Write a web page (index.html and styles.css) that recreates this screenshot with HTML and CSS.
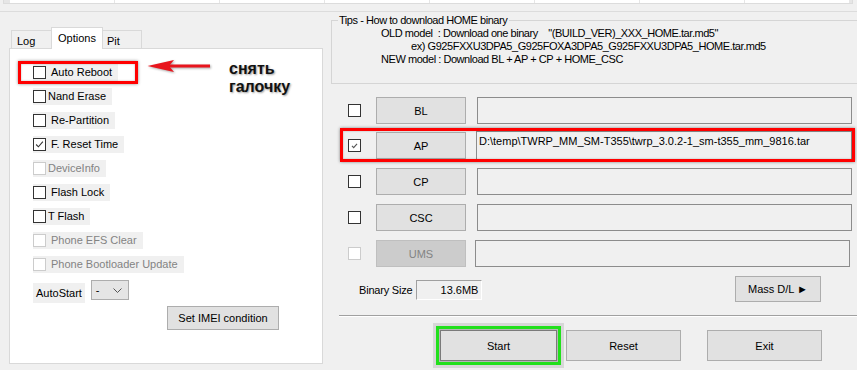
FILE: index.html
```html
<!DOCTYPE html>
<html lang="en">
<head>
    <meta charset="UTF-8">
    <title>Odin</title>
    <link rel="stylesheet" href="styles.css">
</head>
<body>
    <div class="topbar">
        <div class="topbar-frame">
            <span class="cell"></span><span class="cell"></span><span class="cell"></span><span class="cell"></span>
            <span class="cell"></span><span class="cell"></span><span class="cell"></span><span class="cell"></span>
        </div>
    </div>

    <div class="main">
        <div class="left">
            <div class="tabs">
                <div class="tab tab-log">Log</div>
                <div class="tab tab-active">Options</div>
                <div class="tab tab-pit">Pit</div>
            </div>
            <div class="panel">
                <div class="opt"><span class="box"></span><span class="opt-text opt-wide">Auto Reboot</span></div>
                <div class="opt"><span class="box"></span><span class="opt-text">Nand Erase</span></div>
                <div class="opt"><span class="box"></span><span class="opt-text opt-wide">Re-Partition</span></div>
                <div class="opt"><span class="box checked"><svg viewBox="0 0 13 13"><path d="M2.5 6.5 L5.2 9.2 L10.5 3.2"/></svg></span><span class="opt-text opt-wide">F. Reset Time</span></div>
                <div class="opt disabled"><span class="box"></span><span class="opt-text">DeviceInfo</span></div>
                <div class="opt"><span class="box"></span><span class="opt-text opt-wide">Flash Lock</span></div>
                <div class="opt"><span class="box"></span><span class="opt-text">T Flash</span></div>
                <div class="opt disabled"><span class="box"></span><span class="opt-text opt-wide">Phone EFS Clear</span></div>
                <div class="opt disabled"><span class="box"></span><span class="opt-text opt-wide">Phone Bootloader Update</span></div>

                <div class="autostart">
                    <span class="autostart-label">AutoStart</span>
                    <div class="combo">
                        <span>-</span>
                        <svg viewBox="0 0 9 5"><path d="M0.5 0.5 L4.5 4.5 L8.5 0.5"/></svg>
                    </div>
                </div>
                <button class="btn btn-imei">Set IMEI condition</button>

                <!-- annotation drawn over the screenshot -->
                <div class="mark-box mark-auto"></div>
                <svg class="mark-arrow" viewBox="0 0 64 14">
                    <path class="arrow-shaft" d="M20 7 L63 7"/>
                    <path class="arrow-head" d="M0.5 7 L27 1 L22 7 L27 13 Z"/>
                </svg>
                <div class="mark-note">снять<br>галочку</div>
            </div>
        </div>

        <div class="right">
            <fieldset class="tips">
                <legend>Tips - How to download HOME binary</legend>
                <div class="tips-line">OLD model  : Download one binary    "(BUILD_VER)_XXX_HOME.tar.md5"</div>
                <div class="tips-line tips-indent">ex) G925FXXU3DPA5_G925FOXA3DPA5_G925FXXU3DPA5_HOME.tar.md5</div>
                <div class="tips-line">NEW model : Download BL + AP + CP + HOME_CSC</div>
            </fieldset>

            <div class="files">
                <div class="file-row">
                    <span class="box"></span>
                    <button class="btn btn-file">BL</button>
                    <div class="file-path"></div>
                </div>
                <div class="file-row">
                    <span class="box checked small"><svg viewBox="0 0 13 13"><path d="M3.5 7 L5.5 9 L9.5 4.5"/></svg></span>
                    <button class="btn btn-file">AP</button>
                    <div class="file-path file-path-ap">D:\temp\TWRP_MM_SM-T355\twrp_3.0.2-1_sm-t355_mm_9816.tar</div>
                    <div class="mark-box mark-ap"></div>
                </div>
                <div class="file-row">
                    <span class="box"></span>
                    <button class="btn btn-file">CP</button>
                    <div class="file-path"></div>
                </div>
                <div class="file-row">
                    <span class="box"></span>
                    <button class="btn btn-file">CSC</button>
                    <div class="file-path"></div>
                </div>
                <div class="file-row disabled">
                    <span class="box"></span>
                    <button class="btn btn-file">UMS</button>
                    <div class="file-path file-path-ums"></div>
                </div>
            </div>

            <div class="size-row">
                <span class="size-label">Binary Size</span>
                <div class="size-value">13.6MB</div>
                <button class="btn btn-mass">Mass D/L ►</button>
            </div>

            <div class="sep"></div>

            <div class="actions">
                <button class="btn btn-action btn-start">Start</button>
                <button class="btn btn-action">Reset</button>
                <button class="btn btn-action btn-exit">Exit</button>
            </div>
        </div>
    </div>
</body>
</html>
```

FILE: styles.css
```css
:root {
    --window-bg: #f0f0f0;
    --border-light: #d9d9d9;
    --btn-bg: #e1e1e1;
    --btn-border: #adadad;
    --text: #000000;
    --text-disabled: #838383;
    --mark-red: #ff0000;
    --mark-green: #22e01c;
}

* {
    margin: 0;
    padding: 0;
    box-sizing: border-box;
}

body {
    width: 857px;
    height: 370px;
    overflow: hidden;
    background: var(--window-bg);
    color: var(--text);
    font-family: 'Liberation Sans', Arial, sans-serif;
    font-size: 11px;
}

/* top strip (cut-off table) */
.topbar {
    height: 12px;
    border-bottom: 1px solid #dcdcdc;
    padding: 0 4px 0 3px;
}

.topbar-frame {
    height: 4px;
    border: 1px solid #dcdcdc;
    border-top: none;
    display: flex;
    gap: 1px;
    padding-left: 6px;
    background: #e6e6e6;
}

.cell {
    width: 104px;
    height: 3px;
    background: #ffffff;
}

.main {
    display: flex;
    height: 358px;
}

/* left: tabs + options */
.left {
    width: 314px;
    margin-left: 9px;
    padding-top: 15px;
    flex-shrink: 0;
}

.tabs {
    display: flex;
    align-items: flex-end;
    height: 21px;
    padding-left: 2px;
    position: relative;
    z-index: 1;
}

.tab {
    height: 18px;
    border: 1px solid var(--border-light);
    border-bottom: none;
    background: var(--window-bg);
    padding: 4px 0 0 5px;
    line-height: 12px;
}

.tab-log {
    width: 41px;
    margin-right: -1px;
}

.tab-active {
    width: 52px;
    height: 22px;
    margin-bottom: -1px;
    background: #ffffff;
    padding-top: 4px;
    padding-left: 6px;
}

.tab-pit {
    width: 40px;
    margin-left: -1px;
    padding-left: 4px;
}

.panel {
    position: relative;
    height: 316px;
    border: 1px solid var(--border-light);
    background: #ffffff;
    padding: 15px 0 0 23px;
}

.opt {
    display: flex;
    align-items: center;
    width: fit-content;
    height: 17px;
    margin-bottom: 7px;
    background: var(--window-bg);
}

.opt-text {
    margin-left: 2px;
    padding-right: 6px;
    line-height: 17px;
}

.opt-wide {
    margin-left: 5px;
}

.opt.disabled {
    color: var(--text-disabled);
}

.box {
    width: 13px;
    height: 13px;
    flex-shrink: 0;
    border: 1px solid #333333;
    background: #ffffff;
    display: flex;
}

.box svg {
    width: 11px;
    height: 11px;
    fill: none;
    stroke: #333333;
    stroke-width: 1.3;
}

.box.small svg {
    stroke: #555555;
}

.disabled .box {
    border-color: #cccccc;
}

.autostart {
    display: flex;
    align-items: flex-start;
    height: 23px;
    margin-top: 5px;
}

.autostart-label {
    margin-top: 3px;
    height: 20px;
    padding: 0 3px 0 3px;
    line-height: 20px;
    background: var(--window-bg);
}

.combo {
    display: flex;
    align-items: center;
    justify-content: space-between;
    width: 38px;
    height: 20px;
    margin-left: 6px;
    padding: 0 6px 0 4px;
    border: 1px solid var(--btn-border);
    background: #e5e5e5;
}

.combo svg {
    width: 9px;
    height: 5px;
    fill: none;
    stroke: #555555;
}

.btn {
    font-family: inherit;
    font-size: 11px;
    color: var(--text);
    background: var(--btn-bg);
    border: 1px solid var(--btn-border);
}

.btn-imei {
    display: block;
    width: 112px;
    height: 24px;
    margin: 3px 0 0 134px;
}

/* annotations */
.mark-box {
    position: absolute;
    border: 3px solid var(--mark-red);
    box-shadow: 0 0 3px rgba(0, 0, 0, 0.45), inset 0 0 2px rgba(0, 0, 0, 0.3);
}

.mark-auto {
    left: 8px;
    top: 12px;
    width: 120px;
    height: 23px;
}

.mark-arrow {
    position: absolute;
    left: 137px;
    top: 10px;
    width: 64px;
    height: 14px;
    filter: drop-shadow(1px 1px 1px rgba(0, 0, 0, 0.35));
}

.arrow-shaft {
    stroke: #e8151d;
    stroke-width: 3;
}

.arrow-head {
    fill: #e8151d;
}

.mark-note {
    position: absolute;
    left: 219px;
    top: 11px;
    font-size: 16px;
    font-weight: bold;
    line-height: 18px;
    color: #111111;
    text-shadow: 1px 1px 2px rgba(0, 0, 0, 0.4);
}

/* right: tips + files */
.right {
    flex: 1;
    min-width: 0;
}

.tips {
    margin: 2px -6px 0 8px;
    height: 70px;
    border: 1px solid #d5d5d5;
    padding: 0 0 0 49px;
}

.tips legend {
    margin-left: -43px;
    padding: 0 2px 0 1px;
    line-height: 13px;
    letter-spacing: -0.45px;
}

.tips-line {
    line-height: 13px;
    white-space: pre;
    letter-spacing: -0.45px;
}

.tips-indent {
    padding-left: 30px;
}

.files {
    margin-top: 13px;
}

.file-row {
    position: relative;
    display: flex;
    align-items: center;
    height: 27px;
    margin-bottom: 9px;
    padding-left: 25px;
}

.file-row:first-child {
    margin-bottom: 8px;
}

.file-row .box {
    margin-right: 15px;
}

.btn-file {
    width: 90px;
    height: 27px;
}

.file-path {
    width: 375px;
    height: 27px;
    margin-left: 11px;
    border: 1px solid #8c8c8c;
    background: var(--window-bg);
    padding: 3px 2px;
    line-height: 13px;
}

.file-path-ap {
    height: 29px;
    margin-left: 10px;
    width: 376px;
}

.file-path-ums {
    margin-left: 9px;
}

.file-row.disabled .btn-file {
    background: #cccccc;
    border-color: #bfbfbf;
    color: var(--text-disabled);
}

.mark-ap {
    left: 17px;
    right: 2px;
    top: -4px;
    bottom: -3px;
}

.size-row {
    display: flex;
    align-items: center;
    height: 26px;
    margin-top: 1px;
    padding-left: 36px;
}

.size-label {
    margin-top: 2px;
    letter-spacing: -0.2px;
}

.size-value {
    width: 66px;
    height: 20px;
    margin-left: 4px;
    margin-top: 2px;
    padding-right: 3px;
    text-align: right;
    line-height: 18px;
    border: 1px solid;
    border-color: #a0a0a0 #ffffff #ffffff #a0a0a0;
}

.btn-mass {
    width: 86px;
    height: 26px;
    margin-left: auto;
    margin-right: 36px;
}

.sep {
    height: 2px;
    margin: 13px 0 0 16px;
    border-top: 1px solid #a0a0a0;
    border-bottom: 1px solid #ffffff;
}

.actions {
    display: flex;
    margin-top: 13px;
    padding-left: 117px;
}

.btn-action {
    width: 115px;
    height: 31px;
    margin-right: 9px;
}

.btn-start {
    width: 117px;
    border-color: #7a7a7a;
    outline: 3px solid var(--mark-green);
    outline-offset: 1px;
    box-shadow: 0 0 0 4px rgba(0, 0, 0, 0.15), 0 0 0 7px rgba(0, 0, 0, 0.1);
}

.btn-exit {
    margin-left: 17px;
}
```
